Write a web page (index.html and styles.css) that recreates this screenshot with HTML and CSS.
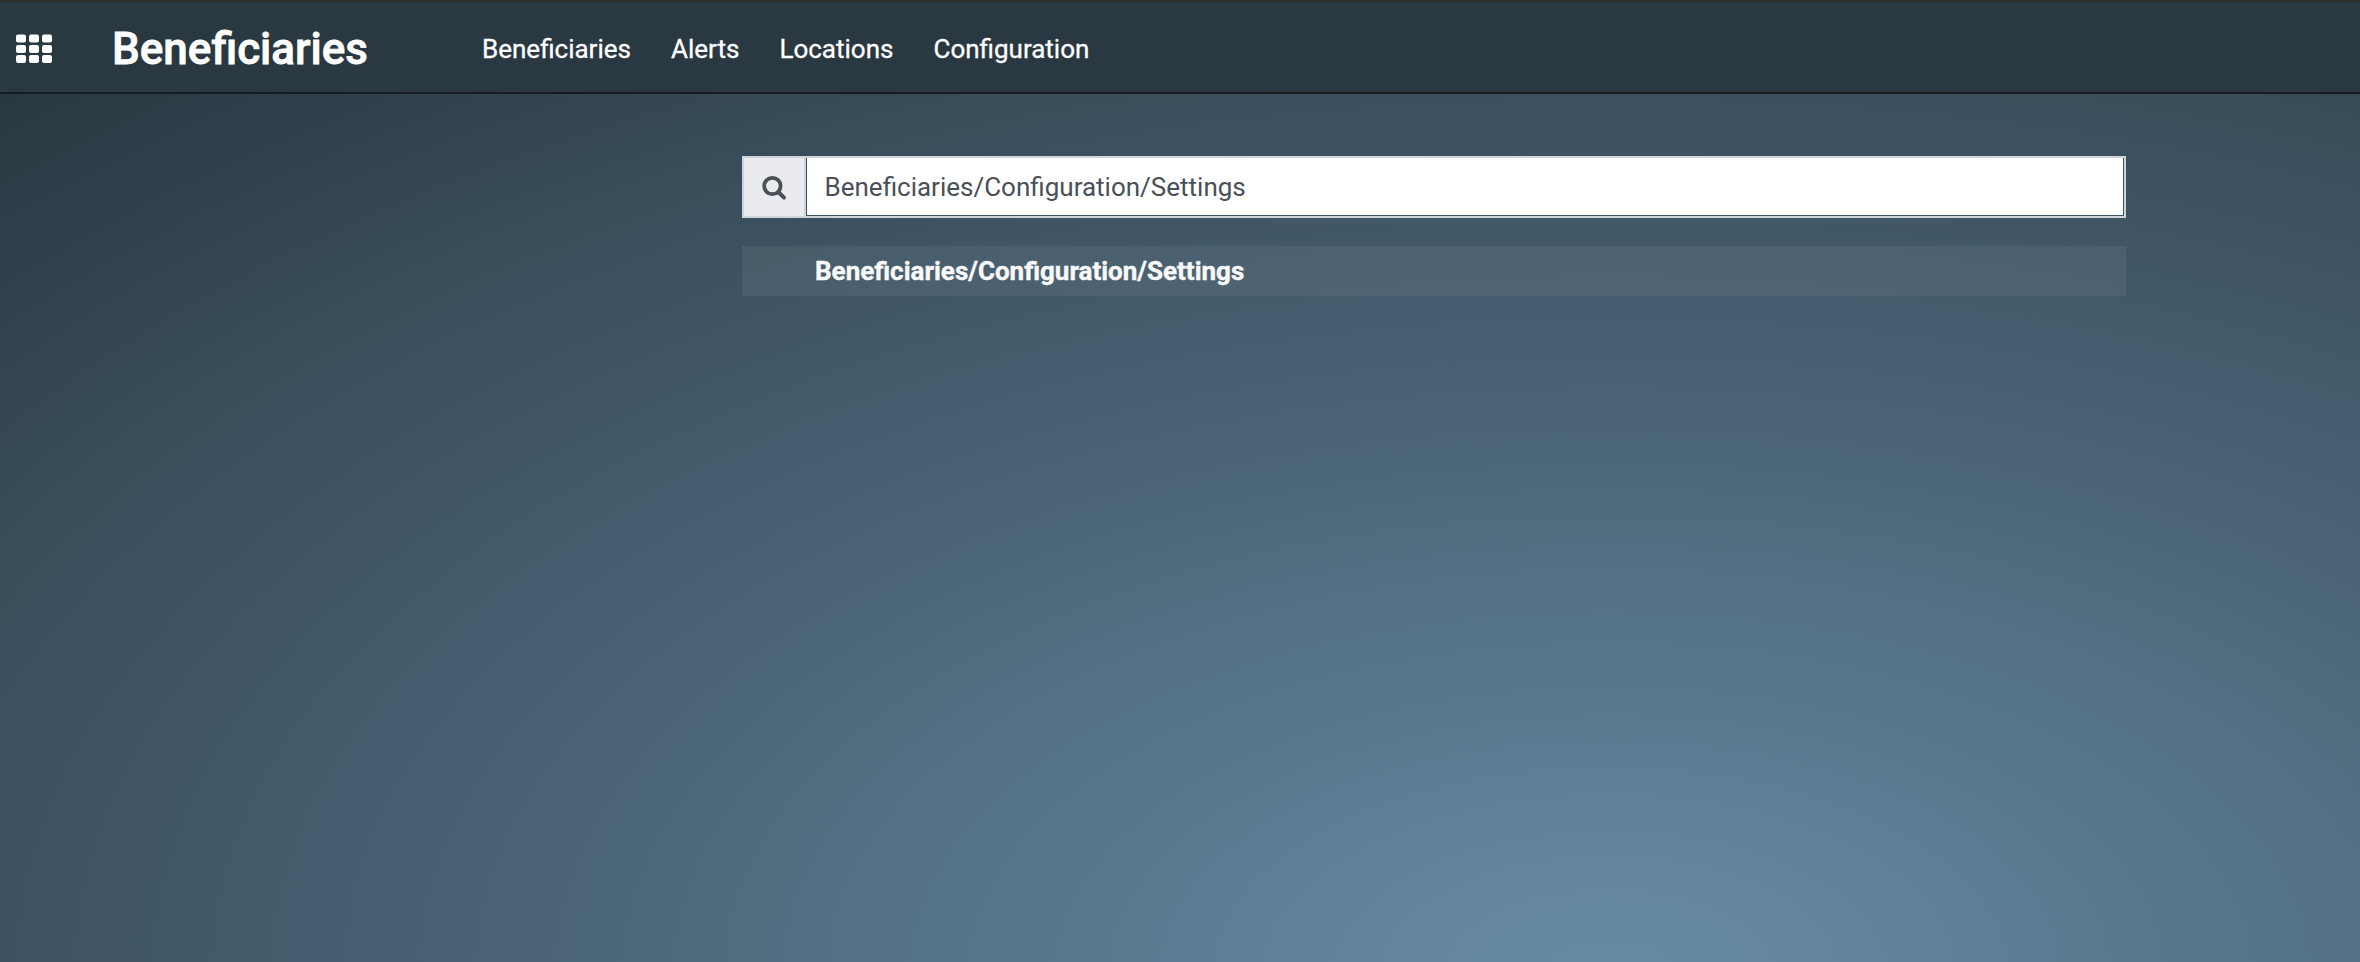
FILE: index.html
```html
<!DOCTYPE html>
<html lang="en">
<head>
<meta charset="utf-8">
<title>Beneficiaries</title>
<link rel="stylesheet" href="styles.css">
</head>
<body>
<header class="navbar">
  <a class="apps" aria-label="Apps">
    <svg width="36" height="30" viewBox="0 0 36 30" fill="#fff">
      <rect x="0" y="0.5" width="10" height="8" rx="2"/><rect x="13" y="0.5" width="10" height="8" rx="2"/><rect x="26" y="0.5" width="10" height="8" rx="2"/>
      <rect x="0" y="11" width="10" height="8" rx="2"/><rect x="13" y="11" width="10" height="8" rx="2"/><rect x="26" y="11" width="10" height="8" rx="2"/>
      <rect x="0" y="21" width="10" height="8" rx="2"/><rect x="13" y="21" width="10" height="8" rx="2"/><rect x="26" y="21" width="10" height="8" rx="2"/>
    </svg>
  </a>
  <span class="brand">Beneficiaries</span>
  <nav class="menu">
    <a>Beneficiaries</a><a>Alerts</a><a>Locations</a><a>Configuration</a>
  </nav>
</header>
<main class="home">
  <div class="search">
    <span class="addon">
      <svg width="24" height="25" viewBox="0 0 24 25" fill="none" stroke="#495057">
        <circle cx="10.4" cy="11" r="8.2" stroke-width="3.8"/>
        <path d="M16.4 17L22 22.6" stroke-width="3.9" stroke-linecap="round"/>
      </svg>
    </span>
    <div class="field"><span class="value">Beneficiaries/Configuration/Settings</span></div>
  </div>
  <div class="result">Beneficiaries/Configuration/Settings</div>
</main>
</body>
</html>
```
FILE: styles.css
```css
* { box-sizing: border-box; }

body {
  margin: 0;
  height: 962px;
  display: flex;
  flex-direction: column;
  overflow: hidden;
  font-family: Roboto, sans-serif;
  font-size: 26px;
  color: #fff;
  background: radial-gradient(ellipse 1930px 1000px at 1610px 975px, #688ca6 0%, #476071 62%, #3b505e 88%, #293840 121%);
}

.navbar {
  display: flex;
  align-items: center;
  height: 94px;
  padding: 4px 0 0 16px;
  background: #2a3842;
  border-top: 2px solid #2b2a2a;
  border-bottom: 2px solid #161c22;
}

.apps {
  display: flex;
  padding-bottom: 1px;
}

.brand {
  width: 370px;
  margin-left: 60px;
  font-size: 44px;
  font-weight: 500;
  -webkit-text-stroke: 0.8px #fff;
}

.menu {
  display: flex;
  gap: 40px;
  -webkit-text-stroke: 0.3px #fff;
}

.home {
  width: 1384px;
  margin: 62px 0 0 742px;
}

.search {
  display: flex;
  height: 62px;
  border: 2px solid #ced4da;
}

.addon {
  display: flex;
  align-items: center;
  justify-content: center;
  width: 62px;
  background: #e9ebef;
  border-right: 2px solid #ced4da;
}

.field {
  flex: 1;
  padding: 0 1px 1px;
}

.value {
  display: flex;
  align-items: center;
  height: 100%;
  padding-left: 17.5px;
  color: #495057;
  background: #fff;
}

.result {
  display: flex;
  align-items: center;
  height: 50px;
  margin-top: 28px;
  padding-left: 73px;
  font-weight: 700;
  color: #f8f9fa;
  background: rgba(255, 255, 255, 0.06);
  -webkit-text-stroke: 0.4px #f8f9fa;
}
```
